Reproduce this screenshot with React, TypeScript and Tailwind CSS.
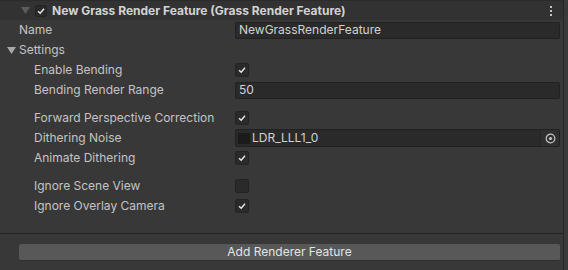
import type { ReactNode } from "react";

function Check({ on = true, size = 14 }: { on?: boolean; size?: number }) {
  return (
    <div
      className="flex shrink-0 items-center justify-center rounded-[2px] border border-[#232323] bg-[#2a2a2a]"
      style={{ width: size, height: size }}
    >
      {on && (
        <svg width="10" height="10" viewBox="0 0 10 10">
          <polyline points="2,5.2 4.2,7.2 8,2.8" fill="none" stroke="#e6e6e6" strokeWidth="1.5" />
        </svg>
      )}
    </div>
  );
}

function Fold({ dim = false }: { dim?: boolean }) {
  return (
    <svg width="9" height="7" viewBox="0 0 9 7">
      <polygon points="0,0 9,0 4.5,7" fill={dim ? "#5c5c5c" : "#a8a8a8"} />
    </svg>
  );
}

function Row({ label, indent = 34, children }: { label: ReactNode; indent?: number; children?: ReactNode }) {
  return (
    <div className="flex h-[20px] items-center">
      <div className="w-[235px] shrink-0 text-[12px] text-[#c4c4c4]" style={{ paddingLeft: indent }}>
        {label}
      </div>
      <div className="flex flex-1 items-center pr-[3px]">{children}</div>
    </div>
  );
}

function TextField({ value }: { value: string }) {
  return (
    <div className="flex h-[17px] w-full items-center rounded-[2px] border border-[#212121] bg-[#2a2a2a] pl-[3px] text-[12px] text-[#d2d2d2]">
      {value}
    </div>
  );
}

export default function App() {
  return (
    <div className="flex h-[270px] w-[568px] bg-[#383838] font-['Inter',sans-serif]">
      <div className="flex w-[564px] shrink-0 flex-col border-r border-[#262626]">
        <div className="flex h-[20px] items-center border-t border-[#2b2b2b] bg-[#323232]">
          <div className="ml-[21px] mr-[5px] flex">
            <Fold dim />
          </div>
          <Check size={12} />
          <span className="ml-[5px] text-[12px] font-bold text-[#d2d2d2]">
            New Grass Render Feature (Grass Render Feature)
          </span>
          <div className="ml-auto mr-[11px] flex flex-col gap-[2px]">
            <div className="h-[2px] w-[2px] bg-[#c4c4c4]" />
            <div className="h-[2px] w-[2px] bg-[#c4c4c4]" />
            <div className="h-[2px] w-[2px] bg-[#c4c4c4]" />
          </div>
        </div>

        <Row label="Name" indent={19}>
          <TextField value="NewGrassRenderFeature" />
        </Row>

        <div className="flex h-[20px] items-center text-[12px] text-[#c4c4c4]">
          <div className="ml-[7px] mr-[3px] flex">
            <Fold />
          </div>
          Settings
        </div>

        <Row label="Enable Bending">
          <Check />
        </Row>
        <Row label="Bending Render Range">
          <TextField value="50" />
        </Row>

        <div className="h-[8px]" />

        <Row label="Forward Perspective Correction">
          <Check />
        </Row>
        <Row label="Dithering Noise">
          <div className="flex h-[18px] w-full items-center rounded-[2px] border border-[#212121] bg-[#2a2a2a] text-[12px] text-[#d2d2d2]">
            <div className="ml-[2px] mr-[2px] h-[11px] w-[12px] bg-[#1b1b1b]" />
            <span>LDR_LLL1_0</span>
            <div className="ml-auto flex h-full w-[19px] items-center justify-center border-l border-[#262626] bg-[#2f2f2f]">
              <svg width="11" height="11" viewBox="0 0 11 11">
                <circle cx="5.5" cy="5.5" r="4.3" fill="none" stroke="#c4c4c4" strokeWidth="1.2" />
                <circle cx="5.5" cy="5.5" r="1.6" fill="#c4c4c4" />
              </svg>
            </div>
          </div>
        </Row>
        <Row label="Animate Dithering">
          <Check />
        </Row>

        <div className="h-[8px]" />

        <Row label="Ignore Scene View">
          <Check on={false} />
        </Row>
        <Row label="Ignore Overlay Camera">
          <Check />
        </Row>

        <div className="h-[17px]" />
        <div className="h-px bg-[#232323]" />
        <div className="flex flex-1 items-start pl-[19px] pr-[3px] pt-[10px]">
          <div className="flex h-[17px] w-full items-center justify-center rounded-[2px] border-b border-[#2e2e2e] bg-[#585858] text-[12px] text-[#e4e4e4]">
            Add Renderer Feature
          </div>
        </div>
      </div>
      <div className="flex-1 bg-[#3a3a3a]" />
    </div>
  );
}
